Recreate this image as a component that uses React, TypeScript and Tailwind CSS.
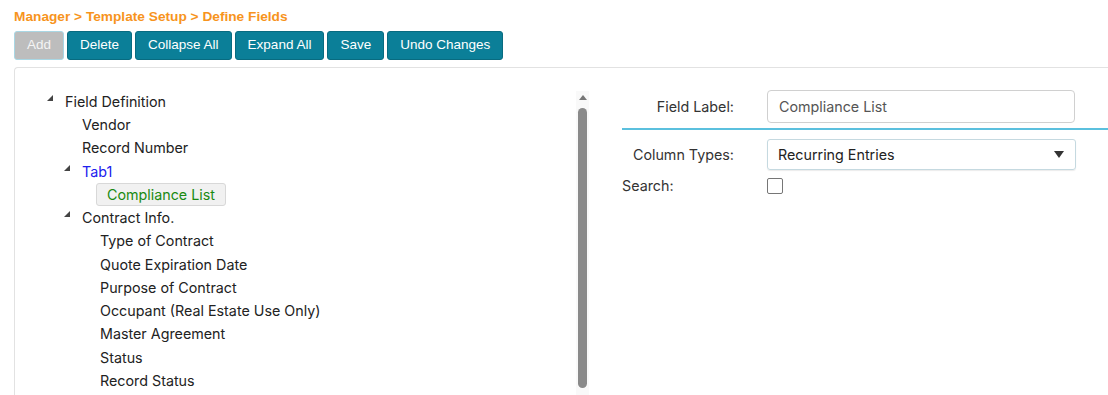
import React from "react";

type Node = {
  label: string;
  level: number;
  expanded?: boolean;
  tone?: "blue" | "selected";
};

const nodes: Node[] = [
  { label: "Field Definition", level: 0, expanded: true },
  { label: "Vendor", level: 1 },
  { label: "Record Number", level: 1 },
  { label: "Tab1", level: 1, expanded: true, tone: "blue" },
  { label: "Compliance List", level: 2, tone: "selected" },
  { label: "Contract Info.", level: 1, expanded: true },
  { label: "Type of Contract", level: 2 },
  { label: "Quote Expiration Date", level: 2 },
  { label: "Purpose of Contract", level: 2 },
  { label: "Occupant (Real Estate Use Only)", level: 2 },
  { label: "Master Agreement", level: 2 },
  { label: "Status", level: 2 },
  { label: "Record Status", level: 2 },
];

const indent = ["pl-[32px]", "pl-[49px]", "pl-[67px]"];

const Toggle = () => (
  <svg width="6" height="6" viewBox="0 0 6 6" className="mb-[7px]">
    <polygon points="6,0 6,6 0,6" fill="#444" />
  </svg>
);

const TreeRow = ({ node }: { node: Node }) => {
  return (
    <div className={`flex items-center h-[23.25px] ${indent[node.level]}`}>
      <div className="w-[18px] shrink-0 flex items-center">
        {node.expanded && <Toggle />}
      </div>
      {node.tone === "selected" ? (
        <span className="-ml-[4px] px-[10px] h-[23px] flex items-center bg-[#f1f1f1] border border-[#d8d8d8] rounded-[3px] text-[#1a8a12]">
          {node.label}
        </span>
      ) : (
        <span className={node.tone === "blue" ? "text-[#2020ee]" : "text-[#222]"}>
          {node.label}
        </span>
      )}
    </div>
  );
};

const Button = ({ label, disabled }: { label: string; disabled?: boolean }) => (
  <button
    className={
      disabled
        ? "h-[29px] px-[12px] rounded-[3px] border border-[#a9d7e4] bg-[#bdbdbd] text-[#f4f4f4]"
        : "h-[29px] px-[12px] rounded-[3px] border border-[#086b80] bg-[#0b7f98] text-white"
    }
  >
    {label}
  </button>
);

const App: React.FC = () => {
  return (
    <div className="w-[1108px] h-[395px] overflow-hidden bg-white pl-[14px] pt-[8px] font-['Inter','Liberation_Sans',sans-serif]">
      {/* Breadcrumb */}
      <div className="text-[13.7px] font-bold text-[#f7941d] leading-[18px] font-['Liberation_Sans',Arial,sans-serif]">
        Manager &gt; Template Setup &gt; Define Fields
      </div>

      {/* Toolbar */}
      <div className="flex gap-[3px] mt-[5px] text-[13.5px] font-['Liberation_Sans',Arial,sans-serif]">
        <Button label="Add" disabled />
        <Button label="Delete" />
        <Button label="Collapse All" />
        <Button label="Expand All" />
        <Button label="Save" />
        <Button label="Undo Changes" />
      </div>

      {/* Panel */}
      <div className="mt-[7px] h-[340px] border-t border-l border-[#e2e2e2] rounded-tl-[4px] flex">
        {/* Tree */}
        <div className="w-[561px] pt-[22px] text-[14.3px]">
          {nodes.map((n) => (
            <TreeRow key={n.label} node={n} />
          ))}
        </div>

        {/* Scrollbar */}
        <div className="mt-[23px] w-[13px] bg-[#f9f9f9] flex flex-col items-center pt-[4px]">
          <svg width="8" height="5" viewBox="0 0 8 5">
            <polygon points="4,0 8,5 0,5" fill="#777" />
          </svg>
          <div className="mt-[8px] w-[9px] h-[280px] rounded-full bg-[#8a8a8a]" />
        </div>

        {/* Form */}
        <div className="flex-1 pl-[33px] pt-[22px] text-[14.3px] text-[#333]">
          <div className="flex items-center">
            <div className="w-[112px] text-right">Field Label:</div>
            <div className="ml-[33px] w-[308px] h-[33px] border border-[#d0d0d0] rounded-[4px] px-[11px] flex items-center text-[#555]">
              Compliance List
            </div>
          </div>
          <div className="mt-[5px] h-[2px] bg-[#5bc0de]" />
          <div className="mt-[9px] flex items-center">
            <div className="w-[112px] text-right">Column Types:</div>
            <div className="ml-[33px] w-[309px] h-[31px] border border-[#c5d9e0] rounded-[3px] shadow-[0_1px_1px_rgba(0,0,0,0.08)] pl-[10px] pr-[11px] flex items-center justify-between text-[#222]">
              <span>Recurring Entries</span>
              <svg width="10" height="7" viewBox="0 0 10 7">
                <polygon points="0,0 10,0 5,7" fill="#333" />
              </svg>
            </div>
          </div>
          <div className="mt-[5px] flex items-center">
            <div className="w-[145px]">Search:</div>
            <div className="w-[16px] h-[16px] border border-[#767676] rounded-[2px] bg-white" />
          </div>
        </div>
      </div>
    </div>
  );
};

export default App;
